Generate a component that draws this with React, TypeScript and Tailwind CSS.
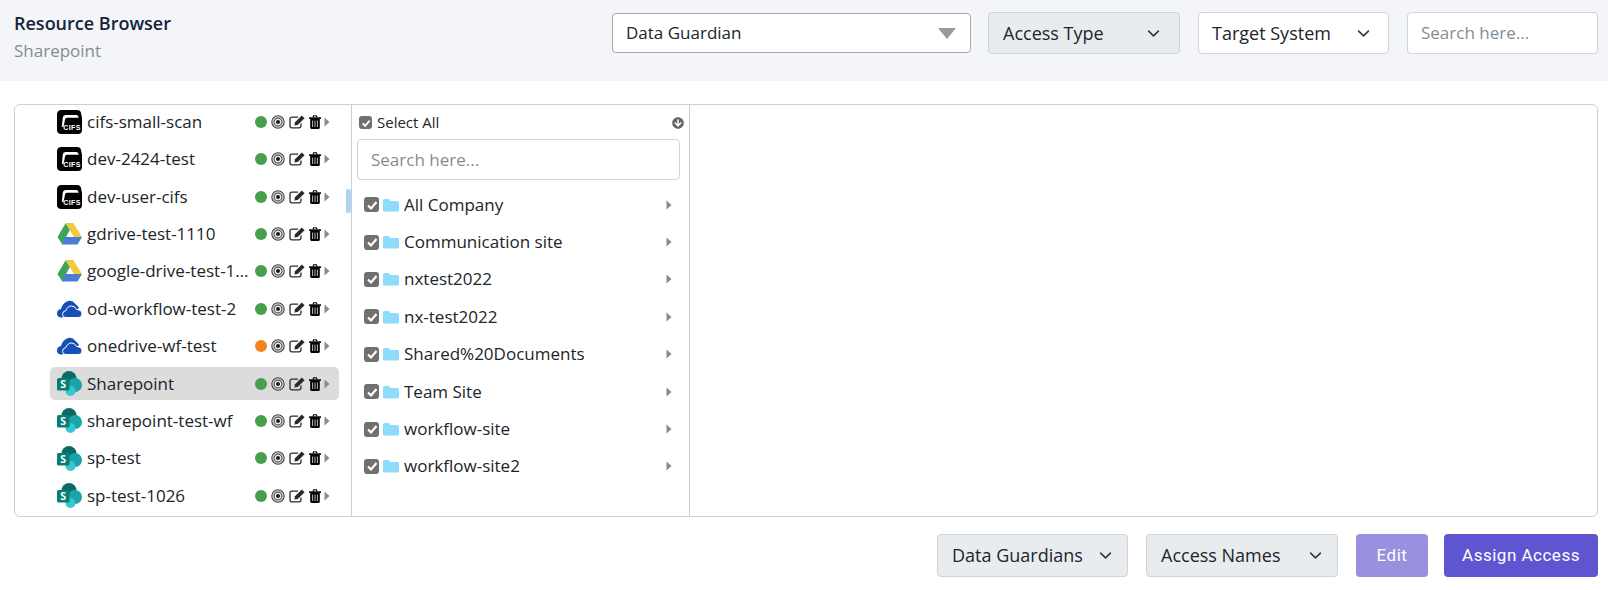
import React from "react";
import { FaArrowCircleDown } from "react-icons/fa";

const Cifs = () => (
  <svg width="25" height="24" viewBox="0 0 25 24">
    <path d="M4.500 0 H20 Q23.500 0 24 3 L25 8 V20 Q25 24 21 24 H4.500 Q0 24 0 20 V4.500 Q0 0 4.500 0 Z" fill="#000" />
    <path d="M4.800 17 L5.800 7.500 Q6 5 8.500 5 H19.500 Q21 5 21.500 7 L21.700 7.800 H9.800 Q8.300 7.800 8 9.500 L7.400 13 Q7 14.500 6.500 17 Z" fill="#fff" />
    <text x="15" y="20" fontSize="7" fontWeight="700" fill="#fff" textAnchor="middle" fontFamily="Liberation Sans, sans-serif" letterSpacing="0.4">CIFS</text>
  </svg>
);

const GDrive = () => (
  <svg width="25" height="24" viewBox="0 0 25 24">
    <path d="M8.500 1.500 H16.500 L9 15 L5 22 L0.500 15 Z" fill="#3da35d" />
    <path d="M8.500 1.500 H16.500 L25 15 H17 Z" fill="#f5c93c" />
    <path d="M8.200 15 H25 L20.500 22.500 H4.500 Z" fill="#4a7fd0" />
  </svg>
);

const OneDrive = () => (
  <svg width="25" height="24" viewBox="0 0 25 24">
    <path d="M4.500 20.500 Q0 20.500 0 16.500 Q0 12.500 4 12 Q5.500 6 11 4 Q15.500 3 18.500 7 Q21 9 22 11 L12 19 Z" fill="#1650b4" />
    <path d="M9 20.500 Q5.500 20.500 5.500 17.500 Q5.500 14 9 13.500 Q10.500 9 14.500 9 Q18 9 19.500 12.500 Q25 12.800 25 17 Q25 20.500 21.500 20.500 Z" fill="#1650b4" stroke="#fff" strokeWidth="1" />
  </svg>
);

const SharePoint = () => (
  <svg width="25" height="25" viewBox="0 0 25 25">
    <circle cx="12" cy="7.500" r="7.500" fill="#0b6a64" />
    <circle cx="18" cy="14" r="7" fill="#1aa3a8" />
    <circle cx="13.500" cy="20" r="5" fill="#37c6d0" />
    <rect x="0" y="7" width="12.500" height="12.500" rx="1.500" fill="#0a7d78" />
    <text x="6.200" y="17.200" fontSize="10.500" fontWeight="700" fill="#fff" textAnchor="middle" fontFamily="Open Sans, sans-serif">S</text>
  </svg>
);

const Target = () => (
  <svg width="14" height="14" viewBox="0 0 14 14" className="shrink-0">
    <circle cx="7" cy="7" r="6.200" fill="#d8d8d8" stroke="#444" strokeWidth="1.100" />
    <circle cx="7" cy="7" r="3.900" fill="#eee" stroke="#555" strokeWidth="1.100" />
    <circle cx="7" cy="7" r="2" fill="#1a1a1a" />
  </svg>
);

const EditIcon = () => (
  <svg width="16" height="14" viewBox="0 0 16 14" className="shrink-0">
    <path d="M12 8.500 V11 Q12 12.800 10.200 12.800 H2.800 Q1 12.800 1 11 V4 Q1 2.200 2.800 2.200 H9" fill="none" stroke="#2a2a2a" strokeWidth="1.300" />
    <path d="M12.800 0.600 L15.600 3.300 L8.700 10 L5.400 10.600 L6 7.300 Z" fill="#2a2a2a" />
  </svg>
);

const Trash = () => (
  <svg width="12" height="14" viewBox="0 0 12 14" className="shrink-0">
    <path d="M4 2.500 L4.600 0.800 H7.400 L8 2.500" fill="none" stroke="#000" strokeWidth="1.100" />
    <rect x="0" y="2.300" width="12" height="1.600" fill="#000" />
    <path d="M1.200 3.500 H10.800 V12.500 Q10.800 14 9.300 14 H2.700 Q1.200 14 1.200 12.500 Z" fill="#000" />
    <path d="M3.600 5.500 V12 M6 5.500 V12 M8.400 5.500 V12" stroke="#cfcfcf" strokeWidth="0.900" />
  </svg>
);

const Caret = ({ className = "" }: { className?: string }) => (
  <svg width="6" height="10" viewBox="0 0 6 10" className={"shrink-0 " + className}>
    <path d="M0.500 0.500 L5.500 5 L0.500 9.500 Z" fill="#8a8a8a" />
  </svg>
);

const Check = ({ size }: { size: number }) => (
  <span
    className="flex shrink-0 items-center justify-center rounded-[3px] bg-[#707070]"
    style={{ width: size, height: size }}
  >
    <svg width={size - 3} height={size - 3} viewBox="0 0 12 12">
      <path d="M2 6.500 L5 9.500 L10.500 3" fill="none" stroke="#fff" strokeWidth="2.200" />
    </svg>
  </span>
);

const Folder = () => (
  <svg width="16" height="14" viewBox="0 0 16 14" className="shrink-0">
    <path d="M0 2.500 Q0 1 1.500 1 H5.500 L7.500 3 H14.500 Q16 3 16 4.500 V12 Q16 13.500 14.500 13.500 H1.500 Q0 13.500 0 12 Z" fill="#8edcfb" />
  </svg>
);

const Chevron = () => (
  <svg width="13" height="13" viewBox="0 0 16 16" className="shrink-0">
    <path d="M2 5 L8 11 L14 5" fill="none" stroke="#343a40" strokeWidth="2" strokeLinecap="round" strokeLinejoin="round" />
  </svg>
);

const resources: { name: string; icon: React.ReactNode; orange?: boolean; selected?: boolean }[] = [
  { name: "cifs-small-scan", icon: <Cifs /> },
  { name: "dev-2424-test", icon: <Cifs /> },
  { name: "dev-user-cifs", icon: <Cifs /> },
  { name: "gdrive-test-1110", icon: <GDrive /> },
  { name: "google-drive-test-1110", icon: <GDrive /> },
  { name: "od-workflow-test-2", icon: <OneDrive /> },
  { name: "onedrive-wf-test", icon: <OneDrive />, orange: true },
  { name: "Sharepoint", icon: <SharePoint />, selected: true },
  { name: "sharepoint-test-wf", icon: <SharePoint /> },
  { name: "sp-test", icon: <SharePoint /> },
  { name: "sp-test-1026", icon: <SharePoint /> },
];

const sites = [
  "All Company",
  "Communication site",
  "nxtest2022",
  "nx-test2022",
  "Shared%20Documents",
  "Team Site",
  "workflow-site",
  "workflow-site2",
];

export default function App() {
  return (
    <div className="h-[590px] w-[1608px] overflow-hidden bg-white font-['Open_Sans',sans-serif] text-[#212529]">
      <header className="flex h-[81px] items-start bg-[#f3f5f9] pl-[14px] pr-[10px] pt-[12px]">
        <div className="flex-1">
          <div className="text-[18px] font-semibold leading-[22px] text-[#16233a]">Resource Browser</div>
          <div className="mt-[6px] text-[17px] leading-[22px] text-[#858b93]">Sharepoint</div>
        </div>
        <div className="mt-[1px] flex h-[40px] w-[359px] items-center justify-between rounded-[4px] border border-[#a9a9a9] bg-white pl-[13px] pr-[14px] text-[17px]">
          <span>Data Guardian</span>
          <svg width="18" height="11" viewBox="0 0 18 11"><path d="M0 0 H18 L9 11 Z" fill="#999" /></svg>
        </div>
        <div className="ml-[17px] flex h-[42px] w-[192px] items-center justify-between rounded-[4px] border border-[#ced4da] bg-[#e9ecef] pl-[14px] pr-[19px] text-[18px]">
          <span>Access Type</span>
          <Chevron />
        </div>
        <div className="ml-[18px] flex h-[42px] w-[191px] items-center justify-between rounded-[4px] border border-[#ced4da] bg-white pl-[13px] pr-[18px] text-[18px]">
          <span>Target System</span>
          <Chevron />
        </div>
        <div className="ml-[18px] flex h-[42px] w-[191px] items-center rounded-[4px] border border-[#ced4da] bg-white pl-[13px] text-[17px] text-[#858c94]">
          Search here...
        </div>
      </header>

      <main className="ml-[14px] mt-[23px] flex h-[413px] w-[1584px] overflow-hidden rounded-[6px] border border-[#cfcfcf]">
        <section className="relative h-full w-[336px] shrink-0 overflow-hidden pl-[35px] pr-[12px] pt-[0.300px]">
          {resources.map((r) => (
            <div
              key={r.name}
              className={
                "mb-[4.400px] flex h-[33px] items-center rounded-[5px] pl-[7px] pr-[9px] " +
                (r.selected ? "bg-[#dcdcdc]" : "")
              }
            >
              <span className="flex w-[25px] shrink-0 items-center justify-center">{r.icon}</span>
              <span className="ml-[5px] w-[163px] shrink-0 truncate text-[17px] leading-[22px]">{r.name}</span>
              <span className="ml-[5px] flex items-center">
                <span className={"h-[12px] w-[12px] shrink-0 rounded-full " + (r.orange ? "bg-[#f58220]" : "bg-[#479e4d]")} />
                <span className="ml-[4px]"><Target /></span>
                <span className="ml-[4px]"><EditIcon /></span>
                <span className="ml-[4px]"><Trash /></span>
                <Caret className="ml-[3px]" />
              </span>
            </div>
          ))}
          <div className="absolute right-0 top-[84px] h-[24px] w-[5px] rounded-[2px] bg-[#a9d6f5]" />
        </section>

        <section className="h-full w-[339px] shrink-0 border-l border-r border-[#cfcfcf] pl-[5px] pr-[9px]">
          <div className="flex h-[34px] items-center pl-[2px] pt-[1px]">
            <Check size={13} />
            <span className="ml-[5px] flex-1 text-[15px]">Select All</span>
            <FaArrowCircleDown className="-mr-[4px] text-[12px] text-[#666]" />
          </div>
          <div className="flex h-[41px] items-center rounded-[4px] border border-[#ced4da] bg-white pl-[13px] text-[17px] text-[#858c94]">
            Search here...
          </div>
          <div className="mt-[6px]">
            {sites.map((s) => (
              <div key={s} className="flex h-[37.400px] items-center pl-[7px] pr-[8px]">
                <Check size={15} />
                <span className="ml-[4px]"><Folder /></span>
                <span className="ml-[5px] flex-1 text-[17px] leading-[22px]">{s}</span>
                <Caret />
              </div>
            ))}
          </div>
        </section>

        <section className="flex-1" />
      </main>

      <footer className="mr-[10px] mt-[17px] flex justify-end text-[18px]">
        <div className="flex h-[43px] w-[191px] items-center justify-between rounded-[4px] border border-[#ced4da] bg-[#e9ecef] pl-[14px] pr-[15px]">
          <span>Data Guardians</span>
          <Chevron />
        </div>
        <div className="ml-[18px] flex h-[43px] w-[192px] items-center justify-between rounded-[4px] border border-[#ced4da] bg-[#e9ecef] pl-[14px] pr-[15px]">
          <span>Access Names</span>
          <Chevron />
        </div>
        <button className="ml-[18px] h-[43px] w-[72px] rounded-[4px] bg-[#9a90e0] font-['Roboto',sans-serif] text-[17px] tracking-[0.5px] text-white">
          Edit
        </button>
        <button className="ml-[16px] h-[43px] w-[154px] rounded-[4px] bg-[#5f55d0] font-['Roboto',sans-serif] text-[17px] tracking-[0.5px] text-white">
          Assign Access
        </button>
      </footer>
    </div>
  );
}
